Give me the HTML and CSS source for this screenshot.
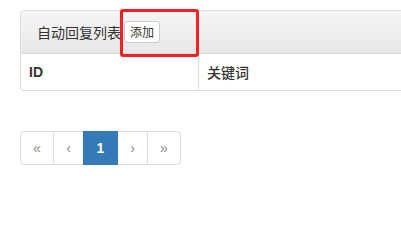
FILE: index.html
```html
<!DOCTYPE html>
<html lang="zh-CN">
<head>
<meta charset="utf-8">
<title>自动回复列表</title>
<link rel="stylesheet" href="styles.css">
</head>
<body>
<div class="page">
  <div class="panel">
    <div class="panel-heading">
      <span class="title">自动回复列表</span>
      <button class="btn">添加</button>
    </div>
    <table class="table">
      <thead>
        <tr>
          <th class="col-id">ID</th>
          <th class="col-kw">关键词</th>
        </tr>
      </thead>
    </table>
  </div>
  <ul class="pagination">
    <li class="pg pg-first"><a>«</a></li>
    <li class="pg pg-prev"><a>‹</a></li>
    <li class="pg pg-num active"><a>1</a></li>
    <li class="pg pg-next"><a>›</a></li>
    <li class="pg pg-last"><a>»</a></li>
  </ul>
  <div class="highlight"></div>
</div>
</body>
</html>
```

FILE: styles.css
```css
html, body {
  margin: 0;
  padding: 0;
  background: #fff;
  overflow: hidden;
}
body {
  font-family: "Liberation Sans", Arial, "Noto Sans CJK SC", sans-serif;
  font-size: 14px;
  line-height: 20px;
  color: #333;
}
.page {
  position: relative;
  display: flex;
  flex-direction: column;
  align-items: flex-start;
  width: 1000px;
  padding: 10px 0 0 20px;
}
.panel {
  width: 900px;
  margin-bottom: 20px;
  border: 1px solid #ddd;
  border-radius: 4px;
  overflow: hidden;
}
.panel-heading {
  display: flex;
  align-items: center;
  height: 22px;
  padding: 10px 15px 10px 16px;
  background: linear-gradient(to bottom, #f5f5f5 0%, #e8e8e8 100%);
  border-bottom: 1px solid #ddd;
}
.title {
  font-family: "Noto Sans CJK SC", sans-serif;
  font-size: 14px;
  color: #333;
}
.btn {
  margin-left: 3px;
  height: 22px;
  padding: 1px 5px;
  font-family: "Noto Sans CJK SC", sans-serif;
  font-size: 12px;
  line-height: 18px;
  color: #333;
  background: #fff;
  border: 1px solid #ccc;
  border-radius: 3px;
  box-sizing: border-box;
}
.table {
  border-collapse: collapse;
  width: 100%;
}
.table th {
  padding: 8px;
  text-align: left;
  font-weight: bold;
  line-height: 20px;
}
.table th.col-id {
  width: 161px;
  border-right: 1px solid #ddd;
}
.table th.col-kw {
  font-family: "Noto Sans CJK SC", sans-serif;
  font-weight: 500;
}
.pagination {
  display: flex;
  list-style: none;
  margin: 20px 0;
  padding: 0;
}
.pg a {
  display: block;
  box-sizing: border-box;
  height: 34px;
  padding: 6px 0;
  text-align: center;
  color: #888;
  background: #fff;
  border: 1px solid #ddd;
  line-height: 20px;
  position: relative;
}
.pg + .pg a { margin-left: -1px; }
.pg-first a { width: 34px; border-radius: 4px 0 0 4px; }
.pg-prev a { width: 31px; }
.pg-num a { width: 35px; }
.pg-next a { width: 31px; }
.pg-last a { width: 34px; border-radius: 0 4px 4px 0; }
.pg.active a {
  background: #337ab7;
  border-color: #337ab7;
  color: #fff;
  font-weight: bold;
  z-index: 2;
}
.highlight {
  position: absolute;
  left: 120px;
  top: 9px;
  width: 79px;
  height: 48px;
  box-sizing: border-box;
  border: 3px solid #f52020;
  border-radius: 3px;
}
```
